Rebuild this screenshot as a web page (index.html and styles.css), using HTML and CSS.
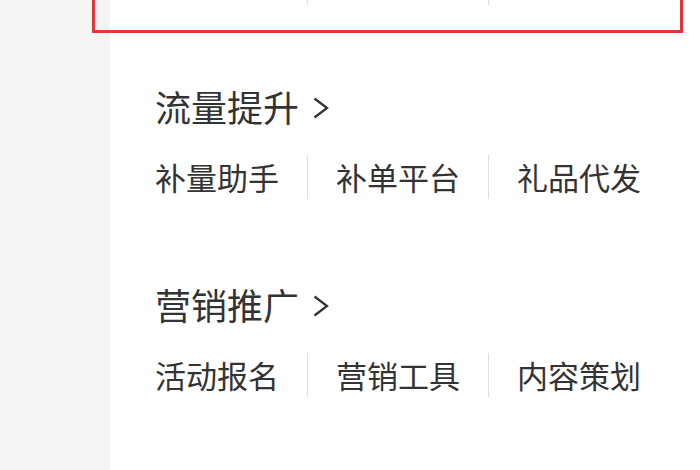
FILE: index.html
```html
<!DOCTYPE html>
<html lang="zh-CN">
<head>
<meta charset="utf-8">
<title>工具</title>
<link rel="stylesheet" href="styles.css">
</head>
<body>
<div class="page">
  <aside class="side"></aside>
  <main class="panel">
    <div class="highlight"></div>
    <div class="links links-top">
      <span class="link blank"></span>
      <span class="link blank"></span>
      <span class="link blank"></span>
    </div>
    <section class="group">
      <h2 class="title">流量提升<svg class="chev" viewBox="0 0 18 24" width="18" height="24"><path d="M2.5 2.5 L15 12 L2.5 21.5" fill="none" stroke="#333" stroke-width="2.3"/></svg></h2>
      <div class="links">
        <span class="link">补量助手</span>
        <span class="link">补单平台</span>
        <span class="link">礼品代发</span>
      </div>
    </section>
    <section class="group">
      <h2 class="title">营销推广<svg class="chev" viewBox="0 0 18 24" width="18" height="24"><path d="M2.5 2.5 L15 12 L2.5 21.5" fill="none" stroke="#333" stroke-width="2.3"/></svg></h2>
      <div class="links">
        <span class="link">活动报名</span>
        <span class="link">营销工具</span>
        <span class="link">内容策划</span>
      </div>
    </section>
  </main>
</div>
</body>
</html>
```
FILE: styles.css
```css
html, body {
  margin: 0;
  padding: 0;
  height: 100%;
  overflow: hidden;
}
body {
  font-family: "Noto Sans CJK SC", "Noto Sans", sans-serif;
  color: #333;
  background: #f4f4f4;
}
.page {
  display: flex;
  height: 470px;
}
.side {
  width: 110px;
  flex: none;
  background: #f4f4f4;
}
.panel {
  flex: 1;
  position: relative;
  background: #fff;
  padding-left: 45px;
}
.highlight {
  position: absolute;
  left: -18px;
  top: -20px;
  width: 585px;
  height: 47px;
  border: 3px solid #e2363b;
}
.links {
  display: flex;
  align-items: center;
  height: 44px;
}
.links-top {
  margin-top: -39px;
}
.link {
  font-size: 31px;
  line-height: 44px;
  height: 44px;
  padding: 0 28px;
  border-left: 1px solid #dedede;
  white-space: nowrap;
}
.link:first-child {
  padding-left: 0;
  border-left: none;
}
.link.blank {
  width: 124px;
}
.group {
  margin-top: 85px;
}
.links-top + .group {
  margin-top: 81px;
}
.title {
  margin: 0 0 29px;
  font-size: 36px;
  font-weight: normal;
  line-height: 40px;
  height: 40px;
  display: flex;
  align-items: center;
  color: #333;
}
.chev {
  margin-left: 13px;
  margin-top: 3px;
}
```
